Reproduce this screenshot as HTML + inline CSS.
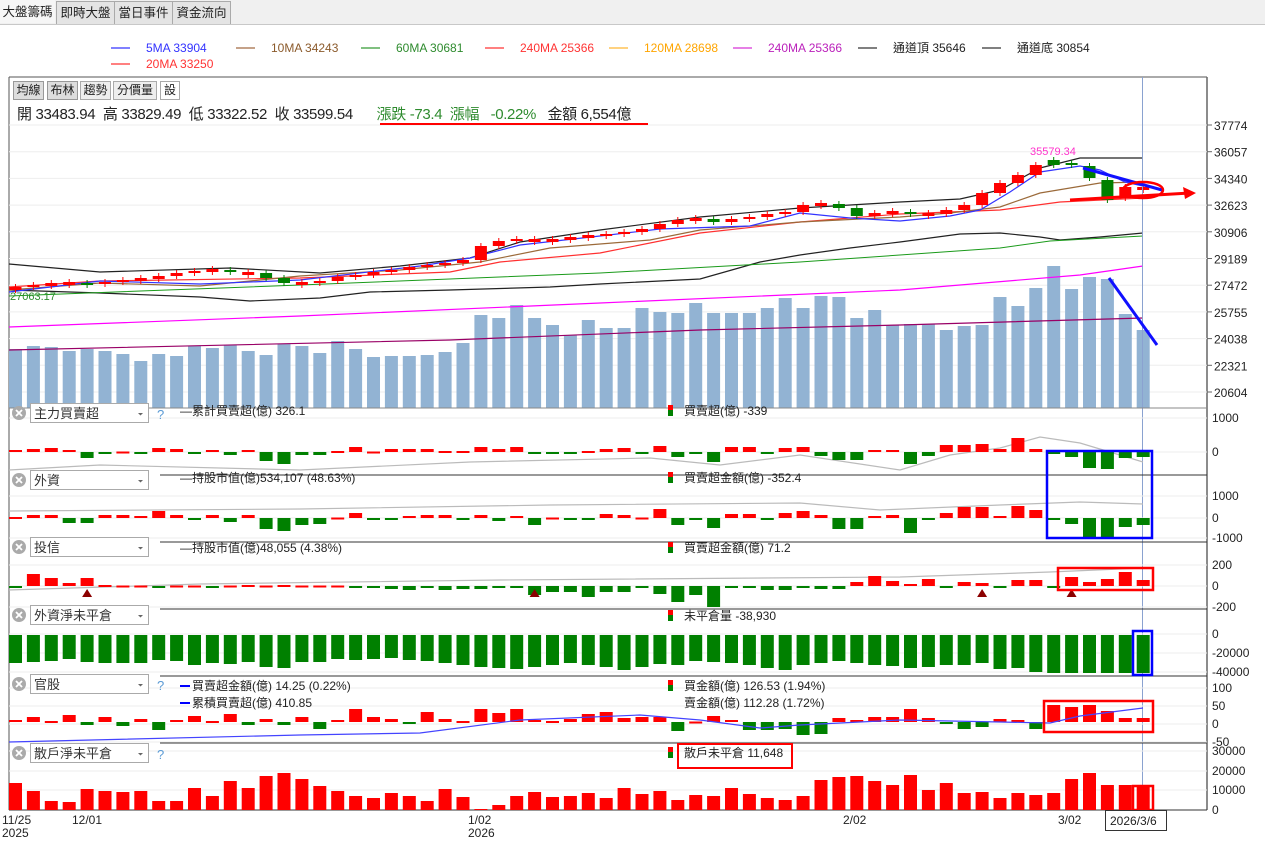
<!DOCTYPE html>
<html><head><meta charset="utf-8">
<style>
*{margin:0;padding:0;box-sizing:border-box}
body{width:1265px;height:844px;background:#fff;font-family:"Liberation Sans","Noto Sans CJK TC",sans-serif;position:relative;overflow:hidden;color:#222}
.tabs{position:absolute;left:0;top:0;width:1265px;height:25px;background:#f0f0f0;border-bottom:1px solid #c8c8c8}
.tab{position:absolute;top:1px;height:23px;font-size:12.5px;line-height:22px;text-align:center;border:1px solid #aaa;border-bottom:none;background:#e4e4e4;white-space:nowrap;overflow:hidden}
.tab.a{background:#f6f6f6;border-color:transparent;top:0}
svg{position:absolute;left:0;top:0}
text{font-family:"Liberation Sans","Noto Sans CJK TC",sans-serif}
</style></head><body>
<div class="tabs">
<div class="tab a" style="left:0;width:55px">大盤籌碼</div>
<div class="tab" style="left:56px;width:59px">即時大盤</div>
<div class="tab" style="left:114px;width:59px">當日事件</div>
<div class="tab" style="left:172px;width:59px">資金流向</div>
</div>
<svg id="s" width="1265" height="844" xmlns="http://www.w3.org/2000/svg"></svg>
<script>
const S=[];
const X=i=>15.5+17.9*i;
function r(x,y,w,h,f,ex){S.push(`<rect x="${x}" y="${y}" width="${w}" height="${h}" fill="${f}" ${ex||''}/>`);}
function l(x1,y1,x2,y2,c,w){S.push(`<line x1="${x1}" y1="${y1}" x2="${x2}" y2="${y2}" stroke="${c}" stroke-width="${w||1}"/>`);}
function t(x,y,s,c,fs,ex){S.push(`<text x="${x}" y="${y}" fill="${c||'#222'}" font-size="${fs||12}" ${ex||''}>${s}</text>`);}
function pl(pts,c,w){S.push(`<polyline fill="none" stroke="${c}" stroke-width="${w||1}" points="${pts}"/>`);}
const lg=[[146,52,'#0000ff','5MA 33904','#3333ff'],[271,52,'#8b4513','10MA 34243','#8b5a2b'],[396,52,'#008000','60MA 30681','#2e8b2e'],[520,52,'#ff0000','240MA 25366','#ff3333'],[644,52,'#ffa500','120MA 28698','#ffa500'],[768,52,'#cc00cc','240MA 25366','#bb22bb'],[893,52,'#000','通道頂 35646','#222'],[1017,52,'#000','通道底 30854','#222'],[146,68,'#ff0000','20MA 33250','#ff3333']];
lg.forEach(a=>{l(a[0]-35,a[1]-4,a[0]-16,a[1]-4,a[2]);t(a[0],a[1],a[3],a[4],12);});
l(9,77,1207,77,'#555');l(9,77,9,810,'#555');l(1207,77,1207,810,'#666',1.5);l(9,810,1207,810,'#333');
const pl2=[37774,36057,34340,32623,30906,29189,27472,25755,24038,22321,20604];
pl2.forEach((p,k)=>{const y=125+k*26.7;l(9,y,1207,y,'#eee');l(1207,y,1212,y,'#666');t(1214,y+5,p,'#222',12);});
const vt=[349,346,347,351,349,351,354,361,354,356,346,348,345,351,355,344,346,353,341,349,357,356,356,355,352,343,315,318,305,318,325,335,320,328,328,308,312,313,303,313,313,313,308,298,308,296,297,318,310,325,324,324,330,326,325,297,306,288,266,289,277,279,314,330];
vt.forEach((y,i)=>r(X(i)-6.5,y,13,408-y,'#92b3d3'));
pl('9,350 450,340 700,330 900,325 1143,318','#990066',1.2);
pl('9,327 300,316 600,303 900,290 1080,275 1143,266','#ff00ff',1.2);
pl('9,264 100,272 230,268 320,273 400,266 470,258 520,242 600,230 700,217 800,208 900,202 960,199 1000,190 1040,168 1080,158 1143,158','#222',1.2);
pl('9,290 100,293 200,297 250,301 320,298 370,292 450,290 550,287 600,284 700,279 760,262 800,255 850,248 900,242 960,234 1000,233 1040,237 1060,240 1100,237 1143,233','#222',1.2);
pl('9,296 300,285 600,273 800,262 1000,248 1050,241 1143,236','#1a9a1a',1);
pl('9,287 100,281 300,278 450,272 500,262 600,253 700,233 800,222 900,214 1000,210 1060,202 1143,198','#ff3030',1.2);
pl('9,290 100,283 200,286 300,276 400,270 480,262 550,248 650,240 700,230 800,222 900,217 950,213 1000,207 1040,193 1100,183 1143,182','#9b6a3a',1.2);
pl('9,292 100,281 200,284 300,280 420,266 470,258 520,245 600,236 660,229 750,226 800,213 850,218 900,221 950,216 980,210 1010,192 1040,172 1080,166 1100,170 1125,182 1143,186','#3333ff',1.2);
const C=[287,285,284,283,284,282,280,279,276,273,271,270,272,273,278,283,283,281,277,275,272,270,267,265,263,260,246,241,239,240,240,237,236,234,232,229,224,220,219,222,219,217,214,212,205,204,208,216,213,212,214,214,210,205,193,183,175,165,163,165,172,198,187,190];
const G=new Set([4,12,14,15,39,46,47,50,58,59,60,61]);
C.forEach((c,i)=>{let o=i?C[i-1]:c+3;let g=G.has(i);let top,bot;
 if(g){top=Math.min(o,c)-(o<c?0:3);bot=Math.max(o,c);if(bot-top<2)bot=top+2}else{top=Math.min(o,c);bot=Math.max(o,c);if(bot-top<2){top=c-1;bot=c+2}}
 if(i==61){top=180;bot=200} if(i==60){top=166;bot=178} if(i==59){top=163;bot=165}
 const col=g?'#008000':'#ff0000';const x=X(i);
 l(x,top-3,x,bot+3,col);r(x-6,top,12,bot-top,col);});
t(1030,155,'35579.34','#ff33cc',11);
t(10,300,'27063.17','#2e8b2e',11);
l(1142.5,77,1142.5,810,'#8aa2d0');
l(380,124,648,124,'#ff0000',2);
l(1083,168,1162,190,'#1010ff',3);
S.push('<ellipse cx="1143" cy="190" rx="20" ry="8" fill="none" stroke="#ff0000" stroke-width="2.5"/>');
l(1070,200,1190,193,'#ff0000',3);S.push('<polygon points="1196,193 1183,187 1185,199" fill="#ff0000"/>');
l(1109,278,1157,345,'#1010ff',3);
const P=[408,475,542,609,676,743,810];
for(let k=1;k<6;k++){l(160,P[k],1207,P[k],'#333');}
l(9,408,1207,408,'#888');
[[418,452],[496,518,538],[565,586,607],[634,653,672],[688,706,724,742],[751,771,790]].forEach(a=>a.forEach(y=>l(9,y,1207,y,'#eee')));
function bars(arr,z,pos,neg,scale){arr.slice(0,64).forEach((v,i)=>{if(v==0)v=0.5;const x=X(i)-6.5;if(v>0)r(x,z-v*scale,13,Math.max(v*scale,2),pos);else r(x,z,13,Math.max(-v*scale,2),neg);});}
const p1=[2,3,4,2,-6,-1,0,-2,4,3,-1,2,-3,2,-9,-12,-3,-3,1,5,0,3,3,3,1,1,5,3,5,-1,-1,-1,1,3,4,-1,6,-5,-1,-10,5,5,-1,4,5,-4,-8,-8,2,2,-12,-4,7,7,8,3,14,3,-1,-5,-16,-17,-6,-5];
pl('9,470 100,465 300,470 470,462 650,458 720,465 800,455 900,470 950,455 1000,448 1040,437 1080,443 1143,462','#bbb',1.2);
bars(p1,452,'#ff0000','#008000',1);
const p2=[1,3,3,-5,-5,3,3,2,7,3,-1,3,-4,3,-11,-13,-7,-6,0,5,-2,-1,2,3,3,-1,3,-3,2,-7,0,-2,-2,4,3,0,9,-7,-1,-10,4,4,-1,5,7,3,-11,-11,2,3,-15,-2,5,11,11,2,12,8,-2,-6,-19,-19,-9,-7];
pl('9,511 300,509 550,505 800,503 880,510 1000,505 1080,502 1143,504','#bbb',1.2);
bars(p2,518,'#ff0000','#008000',1);
const p3=[-1,12,8,3,8,1,0,0,-1,0,0,-1,0,1,0,1,0,0,0,-1,-2,-3,-4,-1,-4,-3,-3,-1,-1,-9,-6,-6,-11,-6,-6,-2,-8,-16,-9,-21,-1,-1,-4,-4,-1,-3,-3,4,10,5,2,7,-1,4,3,-2,6,6,-1,9,4,7,14,6];
pl('9,590 200,584 500,580 900,577 1050,572 1143,568','#bbb',1.2);
bars(p3,586,'#ff0000','#008000',1);
[4,29,54,59].forEach(i=>S.push(`<polygon points="${X(i)},${589} ${X(i)-5},${597} ${X(i)+5},${597}" fill="#8b0000"/>`));
const p4=[28,27,26,24,27,28,28,28,25,26,30,28,29,27,32,33,27,27,24,25,24,23,25,26,28,30,32,33,34,32,30,28,30,32,35,32,29,30,26,27,28,30,33,35,30,28,26,28,30,31,33,32,30,30,28,34,33,37,38,38,38,38,38,38];
p4.forEach((h,i)=>r(X(i)-6.5,635,13,h,'#008000'));
const p5=[2,5,1,7,-3,5,-4,3,-8,2,6,1,8,-3,3,-3,5,-7,2,13,5,3,-1,10,3,1,13,9,13,2,1,3,8,10,4,5,5,-9,0,6,2,-8,-8,-7,-13,-12,4,2,5,5,13,4,-2,-7,-5,3,2,-7,17,15,17,11,4,4];
bars(p5,722,'#ff0000','#008000',1);
pl('9,742 300,735 420,733 520,720 640,715 700,720 760,728 800,725 900,720 1000,722 1050,723 1080,716 1143,708','#4444ff',1.2);
const p6=[27,19,9,8,21,19,18,19,9,9,22,14,29,22,34,37,31,24,19,14,12,17,14,9,21,13,1,5,14,18,13,14,17,12,22,16,19,10,15,14,22,16,12,10,14,30,33,34,29,25,35,20,27,17,18,12,17,15,17,31,37,25,25,24];
p6.forEach((h,i)=>r(X(i)-6.5,810-h,13,h,'#ff0000'));
S.push('<rect x="1047" y="451" width="105" height="87" fill="none" stroke="#0000ff" stroke-width="2.5"/>');
S.push('<rect x="1058" y="568" width="95" height="22" fill="none" stroke="#ff0000" stroke-width="2.5"/>');
S.push('<rect x="1133" y="631" width="19" height="44" fill="none" stroke="#0000ff" stroke-width="2.5"/>');
S.push('<rect x="1044" y="701" width="109" height="31" fill="none" stroke="#ff0000" stroke-width="2.5"/>');
S.push('<rect x="1133" y="786" width="20" height="24" fill="none" stroke="#ff0000" stroke-width="2.5"/>');
S.push('<rect x="678" y="744" width="114" height="24" fill="none" stroke="#ff0000" stroke-width="2"/>');
const H=[[404,'主力買賣超',1],[471,'外資',0],[538,'投信',0],[606,'外資淨未平倉',0],[675,'官股',1],[744,'散戶淨未平倉',1]];
H.forEach(a=>{const y=a[0];S.push(`<circle cx="19" cy="${y+9}" r="7" fill="#aaa"/>`);S.push(`<path d="M16 ${y+6}l6 6M22 ${y+6}l-6 6" stroke="#fff" stroke-width="1.8"/>`);
 S.push(`<rect x="30.5" y="${y-0.5}" width="118" height="19" fill="#fff" stroke="#aaa"/>`);t(34,y+14,a[1],'#333',13);S.push(`<path d="M138 ${y+9}h5l-2.5 2.5z" fill="#666"/>`);
 if(a[2])t(157,y+15,'?','#5b9bd5',13);});
function mark(x,y){r(x,y,5,5,'#ff0000');r(x,y+5,5,6,'#008000');}
t(180,415,'—累計買賣超(億) 326.1','#222',12);mark(668,405);t(684,415,'買賣超(億) -339','#222',12);
t(180,482,'—持股市值(億)534,107 (48.63%)','#222',12);mark(668,472);t(684,482,'買賣超金額(億) -352.4','#222',12);
t(180,552,'—持股市值(億)48,055 (4.38%)','#222',12);mark(668,542);t(684,552,'買賣超金額(億) 71.2','#222',12);
mark(668,610);t(684,620,'未平倉量 -38,930','#222',12);
l(180,686,190,686,'#0000ff',2);t(192,690,'買賣超金額(億) 14.25 (0.22%)','#222',12);mark(668,680);t(684,690,'買金額(億) 126.53 (1.94%)','#222',12);
l(180,703,190,703,'#0000ff',2);t(192,707,'累積買賣超(億) 410.85','#222',12);t(684,707,'賣金額(億) 112.28 (1.72%)','#222',12);
mark(668,747);t(684,757,'散戶未平倉 11,648','#222',12);
[[422,'1000'],[456,'0'],[500,'1000'],[522,'0'],[542,'-1000'],[569,'200'],[590,'0'],[611,'-200'],[638,'0'],[657,'-20000'],[676,'-40000'],[692,'100'],[710,'50'],[728,'0'],[746,'-50'],[755,'30000'],[775,'20000'],[794,'10000'],[814,'0']].forEach(a=>t(1212,a[0],a[1],'#222',12));
t(2,824,'11/25','#222',12);t(2,837,'2025','#222',12);t(72,824,'12/01','#222',12);t(468,824,'1/02','#222',12);t(468,837,'2026','#222',12);t(843,824,'2/02','#222',12);t(1058,824,'3/02','#222',12);
S.push('<rect x="1105.5" y="810.5" width="61" height="20" fill="#fff" stroke="#333"/>');t(1110,825,'2026/3/6','#222',12);
document.getElementById('s').innerHTML=S.join('');
</script>
<div style="position:absolute;left:13px;top:81px;font-size:12px">
<span style="position:absolute;left:0;top:0;width:31px;height:19px;border:1px solid #999;background:#ddd;text-align:center;line-height:17px">均線</span>
<span style="position:absolute;left:34px;top:0;width:31px;height:19px;border:1px solid #999;background:#ddd;text-align:center;line-height:17px">布林</span>
<span style="position:absolute;left:67px;top:0;width:31px;height:19px;border:1px solid #aaa;background:#eee;text-align:center;line-height:17px">趨勢</span>
<span style="position:absolute;left:100px;top:0;width:44px;height:19px;border:1px solid #aaa;background:#eee;text-align:center;line-height:17px">分價量</span>
<span style="position:absolute;left:147px;top:0;width:20px;height:19px;border:1px solid #aaa;background:#fff;text-align:center;line-height:17px">設</span>
</div>
<div style="position:absolute;left:17px;top:103px;font-size:15px;white-space:nowrap;letter-spacing:-0.35px">開 33483.94 &nbsp;高 33829.49 &nbsp;低 33322.52 &nbsp;收 33599.54 <span style="margin-left:20px;color:#2e8b2e">漲跌 -73.4 &nbsp;漲幅 &nbsp;&nbsp;-0.22%</span> &nbsp;&nbsp;金額 6,554億</div>
</body></html>
